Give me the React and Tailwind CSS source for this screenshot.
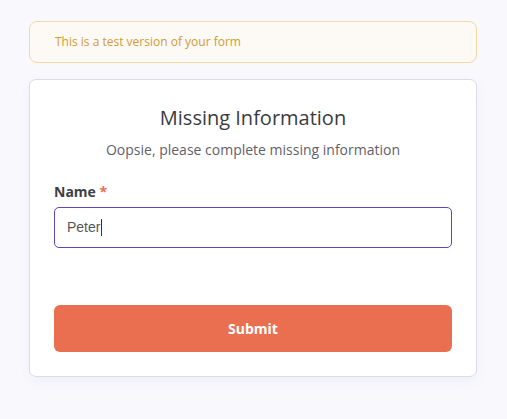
export default function App() {
  return (
    <div className="min-h-[419px] w-full bg-[#f8f8fd] px-[29px] pt-[21px]" style={{ fontFamily: '"Open Sans", sans-serif' }}>
      <div className="w-[448px]">
        <div className="flex h-[42px] items-center rounded-[8px] border border-[#f3d9a6] bg-[#fdf9f4] pl-[25px] text-[12px] text-[#d39b34]">
          This is a test version of your form
        </div>
        <div className="mt-[16px] rounded-[7px] border border-[#dcdbe8] bg-white px-[24px] pb-[24px] pt-[24px] shadow-[0_4px_12px_rgba(120,110,200,0.06)]">
          <h1 className="text-center text-[20px] leading-[28px] text-[#3b3b3f]">Missing Information</h1>
          <p className="mt-[8px] text-center text-[14px] leading-[20px] text-[#5f5f6b]">Oopsie, please complete missing information</p>
          <div className="mt-[22px] text-[14px] font-bold leading-[20px] text-[#3e3e44]">
            Name <span className="text-[#e96f50]">*</span>
          </div>
          <div className="mt-[5px] flex h-[41px] items-center rounded-[5px] border border-[#5a47c2] px-[12px] text-[14px] text-[#555]" style={{ fontFamily: '"Liberation Sans", Arial, sans-serif' }}>
            Peter<span className="ml-px inline-block h-[17px] w-px bg-[#333]"></span>
          </div>
          <button className="mt-[57px] flex h-[47px] w-full items-center justify-center rounded-[6px] bg-[#e96f50] text-[14px] font-bold text-white">
            Submit
          </button>
        </div>
      </div>
    </div>
  );
}
